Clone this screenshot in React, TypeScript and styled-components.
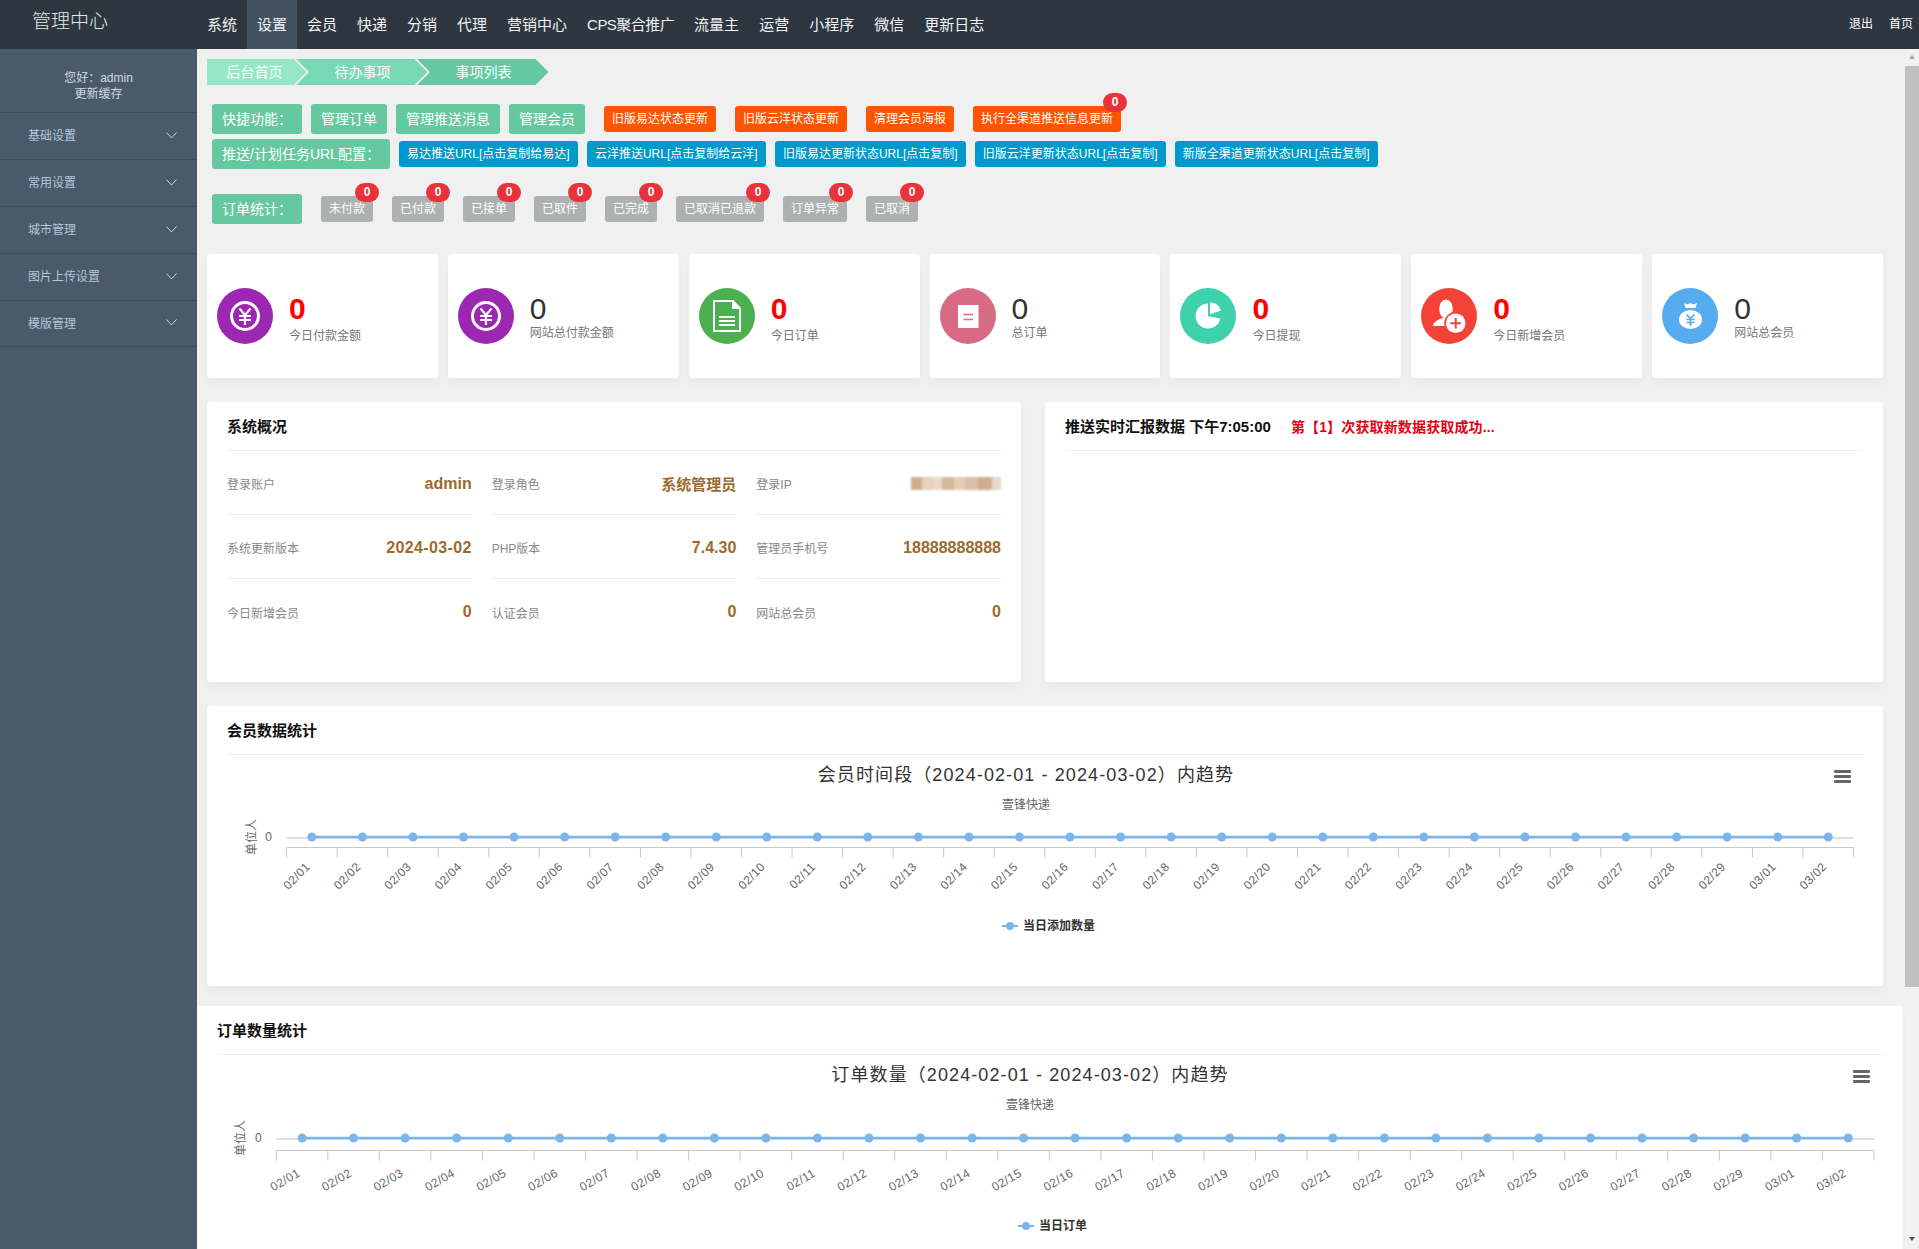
import React from 'react';
import styled, {createGlobalStyle} from 'styled-components';

const GlobalStyle = createGlobalStyle`
  html, body, #root {
    margin: 0;
    height: 100%;
    overflow: hidden;
  }
  body {
    font-family: "Liberation Sans", "Noto Sans CJK SC", sans-serif;
    font-size: 12px;
    color: #333;
    background: #f0f0f0;
  }
  * {
    box-sizing: border-box;
  }
`;

const NAV = ['系统', '设置', '会员', '快递', '分销', '代理', '营销中心', 'CPS聚合推广', '流量主', '运营', '小程序', '微信', '更新日志'];
const MENU = ['基础设置', '常用设置', '城市管理', '图片上传设置', '模版管理'];
const ORDER_TAGS = ['未付款', '已付款', '已接单', '已取件', '已完成', '已取消已退款', '订单异常', '已取消'];
const PUSH_LINKS = ['易达推送URL[点击复制给易达]', '云洋推送URL[点击复制给云洋]', '旧版易达更新状态URL[点击复制]', '旧版云洋更新状态URL[点击复制]', '新版全渠道更新状态URL[点击复制]'];
const DATES = [
    ...Array.from({length: 29}, (_, i) => `02/${String(i + 1).padStart(2, '0')}`),
    '03/01',
    '03/02',
];

const YuanIcon = () => (
    <svg width="56" height="56" viewBox="0 0 56 56" fill="none" stroke="#fff">
        <circle cx="28" cy="28" r="13.5" strokeWidth="3"/>
        <path d="M22.5 20.5 28 27l5.5-6.5M22 28h12M22 32h12M28 27v10" strokeWidth="2.2"/>
    </svg>
);
const DocIcon = () => (
    <svg width="56" height="56" viewBox="0 0 56 56" fill="none" stroke="#fff">
        <path d="M15 13h19l7 7.5V43H15z" strokeWidth="2"/>
        <path d="M33 13l8 8h-8z" fill="#fff" stroke="none"/>
        <path d="M20 29h16M20 33h16M20 37h16" strokeWidth="2"/>
    </svg>
);
const NoteIcon = () => (
    <svg width="56" height="56" viewBox="0 0 56 56">
        <rect x="18" y="17" width="20.5" height="23" fill="#fff"/>
        <path d="M23.5 26.5H33M23.5 31.5H33" stroke="#d86b84" strokeWidth="1.7"/>
    </svg>
);
const PieIcon = () => (
    <svg width="56" height="56" viewBox="0 0 56 56" fill="#fff">
        <path d="M28 28.2V15.6A12.5 12.5 0 1 0 40.3 30.4z"/>
        <path d="M30 26.2V14.6A12 12 0 0 1 41 22.4z"/>
    </svg>
);
const UserAddIcon = () => (
    <svg width="56" height="56" viewBox="0 0 56 56">
        <ellipse cx="25" cy="21" rx="6.8" ry="9.5" fill="#fff"/>
        <path d="M12 38c0-4 5-6 9-8l8 0 5 8z" fill="#fff"/>
        <circle cx="34.7" cy="35.3" r="11.5" fill="#f44336"/>
        <circle cx="34.7" cy="35.3" r="9.8" fill="#fff"/>
        <path d="M34.7 30v10.6M29.4 35.3H40" stroke="#f44336" strokeWidth="2"/>
    </svg>
);
const BagIcon = () => (
    <svg width="56" height="56" viewBox="0 0 56 56" fill="#fff">
        <path d="M22 15l3 1.5L28.500 15l3 1.500L35 15l-1.500 5h-10z"/>
        <ellipse cx="28.500" cy="31.500" rx="11.500" ry="9.500"/>
        <path d="M24.500 26.500l4 4 4-4M24.500 31.500h8M24.500 34.500h8M28.500 30.500V38" fill="none" stroke="#55acee" strokeWidth="1.700"/>
    </svg>
);
const ChevronIcon = () => (
    <svg width="11" height="7" viewBox="0 0 11 7" fill="none" stroke="#c8d3de">
        <path d="M.5.5l5 5.500 5-5.500"/>
    </svg>
);

const STATS = [
    {label: '今日付款金额', bg: '#9c27b0', icon: <YuanIcon/>, hot: true},
    {label: '网站总付款金额', bg: '#9c27b0', icon: <YuanIcon/>},
    {label: '今日订单', bg: '#4caf50', icon: <DocIcon/>, hot: true},
    {label: '总订单', bg: '#d86b84', icon: <NoteIcon/>},
    {label: '今日提现', bg: '#3dd1ac', icon: <PieIcon/>, hot: true},
    {label: '今日新增会员', bg: '#f44336', icon: <UserAddIcon/>, hot: true},
    {label: '网站总会员', bg: '#55acee', icon: <BagIcon/>},
];

const OVERVIEW = [
    {label: '登录账户', value: 'admin'},
    {label: '登录角色', value: '系统管理员', small: true},
    {label: '登录IP', blurred: true},
    {label: '系统更新版本', value: '2024-03-02', spaced: true},
    {label: 'PHP版本', value: '7.4.30'},
    {label: '管理员手机号', value: '18888888888'},
    {label: '今日新增会员', value: '0'},
    {label: '认证会员', value: '0'},
    {label: '网站总会员', value: '0'},
];

type ChartProps = {
    title: string;
    legend: string;
    width: number;
    height: number;
    x0: number;
    x1: number;
    lineY: number;
    axisY: number;
    titleX: number;
    menuX: number;
    legendX: number;
    tilt: number;
    labelY: number;
};

const TrendChart = ({title, legend, width, height, x0, x1, lineY, axisY, titleX, menuX, legendX, tilt, labelY}: ChartProps) => {
    const step = (x1 - x0) / DATES.length;
    const first = x0 + step / 2;
    const last = x1 - step / 2;
    return (
        <ChartSvg width={width} height={height} viewBox={`0 0 ${width} ${height}`}>
            <ChartTitle x={titleX} y={26} textAnchor="middle">{title}</ChartTitle>
            <ChartSub x={titleX} y={54} textAnchor="middle">壹锋快递</ChartSub>
            <g fill="#666">
                <rect x={menuX} y={15} width={17} height={3} rx={1}/>
                <rect x={menuX} y={20} width={17} height={3} rx={1}/>
                <rect x={menuX} y={25} width={17} height={3} rx={1}/>
            </g>
            <AxisText x={x0 - 18} y={lineY + 4} textAnchor="middle">0</AxisText>
            <AxisText x={0} y={0} textAnchor="middle" transform={`translate(${x0 - 31} ${lineY}) rotate(-90)`}>单位人</AxisText>
            <line x1={x0} x2={x1} y1={lineY + 1} y2={lineY + 1} stroke="#c0c0c0"/>
            <line x1={x0} x2={x1} y1={axisY} y2={axisY} stroke="#c8c8c8"/>
            {Array.from({length: DATES.length + 1}, (_, i) => (
                <line key={i} x1={x0 + step * i} x2={x0 + step * i} y1={axisY} y2={axisY + 10} stroke="#c8c8c8"/>
            ))}
            <line x1={first} x2={last} y1={lineY} y2={lineY} stroke="#7cb5ec" strokeWidth="2.5"/>
            {DATES.map((date, i) => (
                <g key={date}>
                    <circle cx={first + step * i} cy={lineY} r="4.5" fill="#7cb5ec"/>
                    <AxisLabel
                        x={0}
                        y={0}
                        textAnchor="end"
                        transform={`translate(${first + step * i - 1} ${axisY + labelY}) rotate(${tilt})`}
                    >
                        {date}
                    </AxisLabel>
                </g>
            ))}
            <line x1={legendX - 8} x2={legendX + 8} y1={171} y2={171} stroke="#7cb5ec" strokeWidth="2"/>
            <circle cx={legendX} cy={171} r="4" fill="#7cb5ec"/>
            <LegendText x={legendX + 13} y={175}>{legend}</LegendText>
        </ChartSvg>
    );
};

export default function App() {
    return (
        <Page>
            <GlobalStyle/>
            <TopBar>
                <Logo>管理中心</Logo>
                <NavList>
                    {NAV.map((item) => (
                        <NavItem key={item} $active={item === '设置'} $tight={item.startsWith('CPS')}>{item}</NavItem>
                    ))}
                </NavList>
                <TopLinks>
                    <span>退出</span>
                    <span>首页</span>
                </TopLinks>
            </TopBar>
            <Body>
                <Sidebar>
                    <Greeting>
                        <div>您好：admin</div>
                        <div>更新缓存</div>
                    </Greeting>
                    {MENU.map((item) => (
                        <MenuItem key={item}>
                            <MenuLabel>{item}</MenuLabel>
                            <ChevronIcon/>
                        </MenuItem>
                    ))}
                </Sidebar>
                <Main>
                    <Content>
                        <Crumbs>
                            <Crumb $bg="#94e8c6" $first>后台首页</Crumb>
                            <Crumb $bg="#76d8b4">待办事项</Crumb>
                            <Crumb $bg="#64c9a0">事项列表</Crumb>
                        </Crumbs>

                        <ActionRow $top={19}>
                            <GreenBtn>快捷功能：</GreenBtn>
                            <GreenBtn>管理订单</GreenBtn>
                            <GreenBtn>管理推送消息</GreenBtn>
                            <GreenBtn>管理会员</GreenBtn>
                            <SmallGroup $left={10}>
                                <SmallBtn $bg="#ff5500">旧版易达状态更新</SmallBtn>
                                <SmallBtn $bg="#ff5500">旧版云洋状态更新</SmallBtn>
                                <SmallBtn $bg="#ff5500">清理会员海报</SmallBtn>
                                <SmallBtn $bg="#ff5500">执行全渠道推送信息更新<Badge>0</Badge></SmallBtn>
                            </SmallGroup>
                        </ActionRow>

                        <ActionRow $top={5}>
                            <GreenBtn>推送/计划任务URL配置：</GreenBtn>
                            {PUSH_LINKS.map((link) => (
                                <PushBtn key={link} $bg="#0099cc">{link}</PushBtn>
                            ))}
                        </ActionRow>

                        <ActionRow $top={25}>
                            <GreenBtn>订单统计：</GreenBtn>
                            <SmallGroup $left={10}>
                                {ORDER_TAGS.map((tag) => (
                                    <SmallBtn key={tag} $bg="#aeb1b1">{tag}<Badge>0</Badge></SmallBtn>
                                ))}
                            </SmallGroup>
                        </ActionRow>

                        <StatGrid>
                            {STATS.map((stat) => (
                                <StatCard key={stat.label}>
                                    <StatIcon $bg={stat.bg}>{stat.icon}</StatIcon>
                                    <StatText $hot={stat.hot}>
                                        <StatValue $hot={stat.hot}>0</StatValue>
                                        <StatLabel $hot={stat.hot}>{stat.label}</StatLabel>
                                    </StatText>
                                </StatCard>
                            ))}
                        </StatGrid>

                        <InfoGrid>
                            <Card>
                                <CardTitle>系统概况</CardTitle>
                                <OverviewGrid>
                                    {OVERVIEW.map((row, i) => (
                                        <OverviewRow key={row.label} $last={i > 5}>
                                            <span>{row.label}</span>
                                            {row.blurred
                                                ? <BlurredIp/>
                                                : <OverviewValue $small={row.small} $spaced={row.spaced}>{row.value}</OverviewValue>}
                                        </OverviewRow>
                                    ))}
                                </OverviewGrid>
                            </Card>
                            <Card>
                                <CardTitle>
                                    推送实时汇报数据 下午7:05:00
                                    <PushStatus>第【1】次获取新数据获取成功...</PushStatus>
                                </CardTitle>
                            </Card>
                        </InfoGrid>

                        <ChartCard>
                            <CardTitle>会员数据统计</CardTitle>
                            <TrendChart
                                title="会员时间段（2024-02-01 - 2024-03-02）内趋势"
                                legend="当日添加数量"
                                width={1637}
                                height={231}
                                x0={59.6}
                                x1={1626.5}
                                lineY={82}
                                axisY={92.5}
                                titleX={799}
                                menuX={1607}
                                legendX={783}
                                tilt={-45}
                                labelY={20}
                            />
                        </ChartCard>
                    </Content>

                    <WideCard>
                        <CardTitle>订单数量统计</CardTitle>
                        <TrendChart
                            title="订单数量（2024-02-01 - 2024-03-02）内趋势"
                            legend="当日订单"
                            width={1667}
                            height={231}
                            x0={59.3}
                            x1={1657}
                            lineY={83}
                            axisY={95.5}
                            titleX={813}
                            menuX={1636}
                            legendX={809}
                            tilt={-30}
                            labelY={25}
                        />
                    </WideCard>
                </Main>
                <ScrollRail>
                    <ScrollThumb/>
                </ScrollRail>
            </Body>
        </Page>
    );
}

const Page = styled.div`
  height: 100%;
  display: flex;
  flex-direction: column;
`;
const TopBar = styled.header`
  height: 49px;
  flex: none;
  display: flex;
  align-items: stretch;
  background: #2e3640;
  color: #fff;
`;
const Logo = styled.div`
  width: 197px;
  padding: 9px 0 0 32px;
  font-size: 19px;
  line-height: 26px;
  font-weight: 300;
  color: #e4e6e8;
`;
const NavList = styled.nav`
  display: flex;
  flex: 1;
`;
const NavItem = styled.div<{$active?: boolean; $tight?: boolean}>`
  padding: 0 10px;
  font-size: 15px;
  line-height: 49px;
  letter-spacing: ${(p) => (p.$tight ? '-0.55px' : '0')};
  color: #f0f2f4;
  background: ${(p) => (p.$active ? '#44525f' : 'transparent')};
`;
const TopLinks = styled.div`
  display: flex;
  gap: 16px;
  padding-right: 6px;
  font-size: 12px;
  line-height: 49px;
`;
const Body = styled.div`
  flex: 1;
  min-height: 0;
  display: flex;
`;
const Sidebar = styled.aside`
  width: 197px;
  flex: none;
  background: #4a5a6b;
`;
const Greeting = styled.div`
  height: 63px;
  padding-top: 21px;
  text-align: center;
  font-size: 12px;
  line-height: 16px;
  color: #d0d8e0;
`;
const MenuItem = styled.div`
  height: 47px;
  padding: 0 20px 2px 28px;
  display: flex;
  align-items: center;
  justify-content: space-between;
  font-size: 12px;
  color: #b4c6d8;
  border-top: 1px solid #3e4d5c;
  &:last-child {
    border-bottom: 1px solid #3e4d5c;
  }
`;
const MenuLabel = styled.span`
  margin-top: -1px;
`;
const Main = styled.main`
  flex: 1;
  min-width: 0;
  overflow: hidden;
  background: #f0f0f0;
`;
const ScrollRail = styled.div`
  position: relative;
  width: 14px;
  flex: none;
  padding-top: 17px;
  background: #f1f1f1;
  &::before,
  &::after {
    content: '';
    position: absolute;
    left: 3.5px;
    border-left: 3.5px solid transparent;
    border-right: 3.5px solid transparent;
  }
  &::before {
    top: 6px;
    border-bottom: 4px solid #a3a3a3;
  }
  &::after {
    bottom: 8px;
    border-top: 4px solid #505050;
  }
`;
const ScrollThumb = styled.div`
  height: 921px;
  background: #c1c1c1;
`;
const Content = styled.div`
  padding: 10px 22px 20px 10px;
`;
const Crumbs = styled.div`
  display: flex;
  height: 26px;
`;
const Crumb = styled.div<{$bg: string; $first?: boolean}>`
  padding: ${(p) => (p.$first ? '0 24px 0 19.5px' : '0 37px 0 38.5px')};
  margin-left: ${(p) => (p.$first ? '0' : '-10.5px')};
  font-size: 14px;
  line-height: 26px;
  color: #fff;
  background: ${(p) => p.$bg};
  clip-path: ${(p) => (p.$first
    ? 'polygon(0 0, calc(100% - 13px) 0, 100% 50%, calc(100% - 13px) 100%, 0 100%)'
    : 'polygon(0 0, calc(100% - 13px) 0, 100% 50%, calc(100% - 13px) 100%, 0 100%, 13px 50%)')};
`;
const ActionRow = styled.div<{$top: number}>`
  margin-top: ${(p) => p.$top}px;
  padding-left: 5px;
  display: flex;
  align-items: center;
  gap: 9px;
`;
const GreenBtn = styled.div`
  height: 30px;
  padding: 0 10px;
  font-size: 14px;
  line-height: 30px;
  color: #fff;
  background: #66c8a0;
  border-radius: 3px;
`;
const SmallGroup = styled.div<{$left: number}>`
  margin-left: ${(p) => p.$left}px;
  display: flex;
  gap: 19px;
`;
const SmallBtn = styled.div<{$bg: string}>`
  position: relative;
  height: 26px;
  padding: 0 8px;
  font-size: 12px;
  line-height: 26px;
  color: #fff;
  background: ${(p) => p.$bg};
  border-radius: 3px;
`;
const PushBtn = styled(SmallBtn)`
  margin-right: 0.3px;
`;
const Badge = styled.span`
  position: absolute;
  top: -13px;
  right: -6px;
  width: 24px;
  height: 19px;
  border-radius: 10px;
  background: #e8333a;
  text-align: center;
  font-size: 12px;
  font-weight: 700;
  line-height: 19px;
`;
const StatGrid = styled.div`
  margin-top: 30px;
  display: grid;
  grid-template-columns: repeat(7, 1fr);
  gap: 10px;
`;
const StatCard = styled.div`
  height: 124px;
  padding-left: 10px;
  display: flex;
  align-items: center;
  gap: 16px;
  background: #fff;
  border-radius: 3px;
  box-shadow: 0 6px 10px rgba(0, 0, 0, 0.03);
`;
const StatIcon = styled.div<{$bg: string}>`
  width: 56px;
  height: 56px;
  flex: none;
  border-radius: 50%;
  background: ${(p) => p.$bg};
  svg {
    display: block;
  }
`;
const StatText = styled.div<{$hot?: boolean}>`
  padding-top: ${(p) => (p.$hot ? '5px' : '2px')};
`;
const StatValue = styled.div<{$hot?: boolean}>`
  font-size: 30px;
  line-height: 32px;
  font-weight: ${(p) => (p.$hot ? 700 : 400)};
  color: ${(p) => (p.$hot ? '#ff0000' : '#333')};
`;
const StatLabel = styled.div<{$hot?: boolean}>`
  margin-top: ${(p) => (p.$hot ? '3px' : '0')};
  font-size: 12px;
  line-height: 16px;
  color: #777;
`;
const InfoGrid = styled.div`
  margin: 24px 0;
  display: grid;
  grid-template-columns: 814px 1fr;
  gap: 24px;
`;
const Card = styled.section`
  height: 280px;
  padding: 0 20px;
  background: #fff;
  border-radius: 3px;
  box-shadow: 0 6px 10px rgba(0, 0, 0, 0.03);
`;
const ChartCard = styled(Card)`
  padding-right: 19px;
`;
const WideCard = styled(Card)`
  height: auto;
  min-height: 280px;
  margin-right: 2px;
  padding-right: 19px;
  border-radius: 0;
`;
const CardTitle = styled.h3`
  margin: 0;
  height: 49px;
  font-size: 15px;
  line-height: 50px;
  font-weight: 700;
  color: #111;
  border-bottom: 1px solid #f0f0f0;
`;
const PushStatus = styled.span`
  margin-left: 20px;
  font-size: 14px;
  letter-spacing: 0.15px;
  color: #e60012;
`;
const OverviewGrid = styled.div`
  display: grid;
  grid-template-columns: repeat(3, 1fr);
  column-gap: 20px;
`;
const OverviewRow = styled.div<{$last?: boolean}>`
  height: 64px;
  padding-top: 2px;
  display: flex;
  align-items: center;
  justify-content: space-between;
  font-size: 12px;
  color: #888;
  border-bottom: ${(p) => (p.$last ? 'none' : '1px solid #f0f0f0')};
`;
const OverviewValue = styled.span<{$small?: boolean; $spaced?: boolean}>`
  font-size: ${(p) => (p.$small ? '15px' : '16px')};
  font-weight: 700;
  letter-spacing: ${(p) => (p.$spaced ? '0.35px' : '0')};
  color: #9c6a2e;
`;
const BlurredIp = styled.div`
  width: 90px;
  height: 13px;
  filter: blur(1px);
  background: linear-gradient(
    90deg,
    #cfae8b 0 12%,
    #e4d3c2 12% 24%,
    #ead9c8 24% 34%,
    #d5b899 34% 48%,
    #e2cdb8 48% 60%,
    #d9bfa3 60% 74%,
    #cdaf8e 74% 90%,
    #e6dacd 90% 100%
  );
`;
const ChartSvg = styled.svg`
  display: block;
`;
const ChartTitle = styled.text`
  font-size: 18px;
  letter-spacing: 1.1px;
  fill: #333;
`;
const ChartSub = styled.text`
  font-size: 12px;
  fill: #666;
`;
const AxisText = styled.text`
  font-size: 12px;
  fill: #666;
`;
const AxisLabel = styled(AxisText)`
  letter-spacing: 0.4px;
`;
const LegendText = styled.text`
  font-size: 12px;
  font-weight: 700;
  fill: #333;
`;
